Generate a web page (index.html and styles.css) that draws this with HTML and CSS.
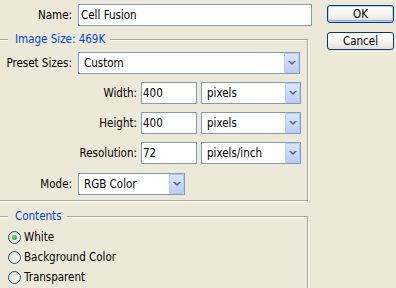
FILE: index.html
```html
<!DOCTYPE html>
<html>
<head>
<meta charset="utf-8">
<link rel="stylesheet" href="styles.css">
</head>
<body>
<div class="dialog">
  <div class="main">
    <div class="name-row">
      <span class="lbl lbl-a">Name:</span>
      <span class="field field-name">Cell Fusion</span>
    </div>
    <fieldset class="group size-group">
      <legend>Image Size: 469K</legend>
      <div class="row">
        <span class="lbl lbl-a">Preset Sizes:</span>
        <div class="select sel-preset"><span class="val">Custom</span><span class="arrow"><svg width="8" height="5" viewBox="0 0 8 5"><path d="M0 0h2l2 2 2-2h2l-4 4z" fill="#4D6185"/></svg></span></div>
      </div>
      <div class="row">
        <span class="lbl lbl-b">Width:</span>
        <span class="field field-num">400</span>
        <div class="select sel-unit"><span class="val">pixels</span><span class="arrow"><svg width="8" height="5" viewBox="0 0 8 5"><path d="M0 0h2l2 2 2-2h2l-4 4z" fill="#4D6185"/></svg></span></div>
      </div>
      <div class="row">
        <span class="lbl lbl-b">Height:</span>
        <span class="field field-num">400</span>
        <div class="select sel-unit"><span class="val">pixels</span><span class="arrow"><svg width="8" height="5" viewBox="0 0 8 5"><path d="M0 0h2l2 2 2-2h2l-4 4z" fill="#4D6185"/></svg></span></div>
      </div>
      <div class="row">
        <span class="lbl lbl-b">Resolution:</span>
        <span class="field field-num">72</span>
        <div class="select sel-unit"><span class="val">pixels/inch</span><span class="arrow"><svg width="8" height="5" viewBox="0 0 8 5"><path d="M0 0h2l2 2 2-2h2l-4 4z" fill="#4D6185"/></svg></span></div>
      </div>
      <div class="row row-mode">
        <span class="lbl lbl-a">Mode:</span>
        <div class="select sel-mode"><span class="val">RGB Color</span><span class="arrow"><svg width="8" height="5" viewBox="0 0 8 5"><path d="M0 0h2l2 2 2-2h2l-4 4z" fill="#4D6185"/></svg></span></div>
      </div>
    </fieldset>
    <fieldset class="group contents-group">
      <legend>Contents</legend>
      <div class="radio-row"><span class="radio checked"></span><span class="rlabel">White</span></div>
      <div class="radio-row"><span class="radio"></span><span class="rlabel">Background Color</span></div>
      <div class="radio-row"><span class="radio"></span><span class="rlabel">Transparent</span></div>
    </fieldset>
  </div>
  <div class="side">
    <button class="btn btn-default">OK</button>
    <button class="btn">Cancel</button>
  </div>
</div>
</body>
</html>
```
FILE: styles.css
```css
html, body {
  margin: 0;
  padding: 0;
}
body {
  width: 396px;
  height: 288px;
  overflow: hidden;
  background: #ECE9D8;
  font-family: "DejaVu Sans Condensed", "Liberation Sans", Tahoma, sans-serif;
  font-size: 11.5px;
  line-height: 13px;
  color: #000;
}
.dialog {
  display: flex;
  align-items: flex-start;
  height: 288px;
  overflow: hidden;
}
.main {
  width: 312px;
  flex: none;
}
.name-row {
  display: flex;
  align-items: center;
  height: 22px;
  padding-top: 4px;
}
.lbl {
  flex: none;
  text-align: right;
  white-space: nowrap;
}
.name-row .lbl-a {
  width: 72px;
  margin-right: 6px;
}
.field {
  box-sizing: border-box;
  height: 22px;
  border: 1px solid #7F9DB9;
  background: #fff;
  display: flex;
  align-items: center;
  flex: none;
}
.field-name {
  width: 234px;
  padding-left: 2px;
}
.group {
  box-sizing: border-box;
  width: 311px;
  margin: 0 0 0 -3px;
  border: 1px solid #ACA899;
  box-shadow: inset 1px 1px 0 #fff, 1px 1px 0 #fff;
  padding: 0;
  min-width: 0;
}
.group legend {
  margin-left: 10px;
  padding: 0 5px 0 7px;
  color: #0046D5;
  background: #ECE9D8;
  line-height: 13px;
}
.size-group {
  margin-top: 7px;
  padding: 6px 0 5px 0;
}
.row {
  display: flex;
  align-items: center;
  height: 22px;
}
.row + .row {
  margin-top: 8px;
}
.row.row-mode {
  margin-top: 9px;
}
.group .lbl-a {
  width: 74px;
  margin-right: 6px;
}
.lbl-b {
  width: 139px;
  margin-right: 4px;
}
.field-num {
  width: 56px;
  padding-left: 1px;
  margin-right: 4px;
}
.select {
  box-sizing: border-box;
  height: 22px;
  border: 1px solid #7F9DB9;
  background: #fff;
  display: flex;
  flex: none;
}
.sel-preset {
  width: 222px;
}
.sel-unit {
  width: 100px;
}
.sel-mode {
  width: 107px;
}
.val {
  flex: 1;
  display: flex;
  align-items: center;
  padding-left: 5px;
  white-space: nowrap;
}
.arrow {
  flex: none;
  box-sizing: border-box;
  width: 15px;
  border: 1px solid #B6CAF6;
  border-radius: 1px;
  background: linear-gradient(#D9E4FD, #BCCDF9);
  display: flex;
  align-items: center;
  justify-content: center;
}
.arrow svg {
  display: block;
}
.contents-group {
  margin-top: 9px;
  padding: 4px 0 12px 0;
}
.radio-row {
  display: flex;
  align-items: center;
  height: 20px;
}
.radio {
  flex: none;
  box-sizing: border-box;
  width: 13px;
  height: 13px;
  margin-left: 10px;
  margin-right: 3px;
  border: 1px solid #1C5180;
  border-radius: 50%;
  background: linear-gradient(135deg, #DCD7CB 0%, #F4F3EE 60%, #FFFFFF 100%);
  display: flex;
  align-items: center;
  justify-content: center;
}
.radio.checked::after {
  content: "";
  width: 5px;
  height: 5px;
  border-radius: 50%;
  background: radial-gradient(circle at 40% 40%, #7BE07A 0%, #2DB52B 50%, #1E9A1D 100%);
}
.side {
  flex: none;
  margin-left: 15px;
  padding-top: 5px;
  display: flex;
  flex-direction: column;
  gap: 9px;
}
.btn {
  display: block;
  box-sizing: border-box;
  width: 67px;
  height: 18px;
  padding: 0;
  border: 1px solid #003C74;
  border-radius: 3px;
  background: linear-gradient(#FFFFFF 0%, #F5F4EF 55%, #E2DFD4 100%);
  font-family: "DejaVu Sans Condensed", "Liberation Sans", Tahoma, sans-serif;
  font-size: 11.5px;
  line-height: 13px;
  color: #000;
}
.btn-default {
  box-shadow: inset 0 0 0 1px #B9D1F6, inset 0 -1px 0 1px #8FAAEF;
}
```
